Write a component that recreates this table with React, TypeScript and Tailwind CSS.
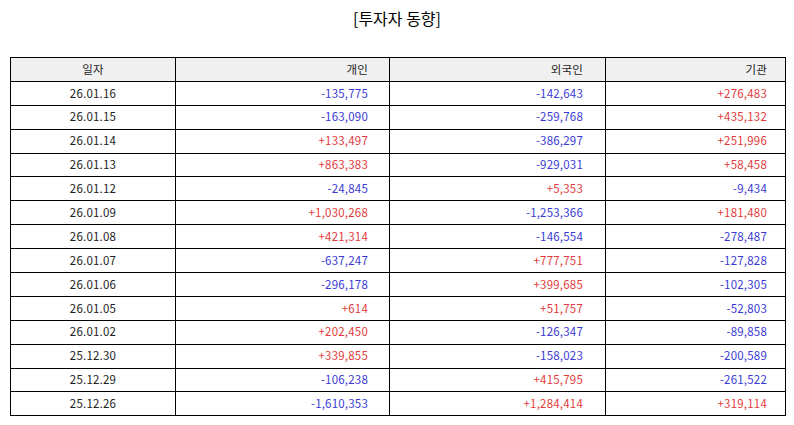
const rows: [string, string, string, string][] = [
  ['26.01.16', '-135,775', '-142,643', '+276,483'],
  ['26.01.15', '-163,090', '-259,768', '+435,132'],
  ['26.01.14', '+133,497', '-386,297', '+251,996'],
  ['26.01.13', '+863,383', '-929,031', '+58,458'],
  ['26.01.12', '-24,845', '+5,353', '-9,434'],
  ['26.01.09', '+1,030,268', '-1,253,366', '+181,480'],
  ['26.01.08', '+421,314', '-146,554', '-278,487'],
  ['26.01.07', '-637,247', '+777,751', '-127,828'],
  ['26.01.06', '-296,178', '+399,685', '-102,305'],
  ['26.01.05', '+614', '+51,757', '-52,803'],
  ['26.01.02', '+202,450', '-126,347', '-89,858'],
  ['25.12.30', '+339,855', '-158,023', '-200,589'],
  ['25.12.29', '-106,238', '+415,795', '-261,522'],
  ['25.12.26', '-1,610,353', '+1,284,414', '+319,114'],
];

function Num({ v, pad }: { v: string; pad: string }) {
  const color = v.startsWith('-') ? 'text-[#3a3ad6]' : 'text-[#e33b3b]';
  return <td className={`border border-black text-right ${pad} ${color}`}>{v}</td>;
}

export default function App() {
  return (
    <div
      className="w-[794px] h-[425px] bg-white text-[#222]"
      style={{ fontFamily: '"Noto Sans CJK KR", "Noto Sans", sans-serif' }}
    >
      {/* Title */}
      <h1 className="h-[38px] pt-[5px] text-center text-[16px] leading-[26px] text-black">[투자자 동향]</h1>

      {/* Investor table */}
      <div className="pl-[10px] pt-[19px]">
        <table className="w-[775px] table-fixed border-collapse text-[11.5px] leading-none tracking-[0.2px]">
          <colgroup>
            <col className="w-[165px]" />
            <col className="w-[214px]" />
            <col className="w-[216px]" />
            <col className="w-[180px]" />
          </colgroup>
          <thead>
            <tr className="h-[23.9px] bg-[#f0f0f0]">
              <th className="border border-black text-center font-normal">일자</th>
              <th className="border border-black text-right pr-[21px] font-normal">개인</th>
              <th className="border border-black text-right pr-[22px] font-normal">외국인</th>
              <th className="border border-black text-right pr-[18px] font-normal">기관</th>
            </tr>
          </thead>
          <tbody>
            {rows.map((r) => (
              <tr key={r[0]} className="h-[23.9px]">
                <td className="border border-black text-center">{r[0]}</td>
                <Num v={r[1]} pad="pr-[21px]" />
                <Num v={r[2]} pad="pr-[22px]" />
                <Num v={r[3]} pad="pr-[18px]" />
              </tr>
            ))}
          </tbody>
        </table>
      </div>
    </div>
  );
}
